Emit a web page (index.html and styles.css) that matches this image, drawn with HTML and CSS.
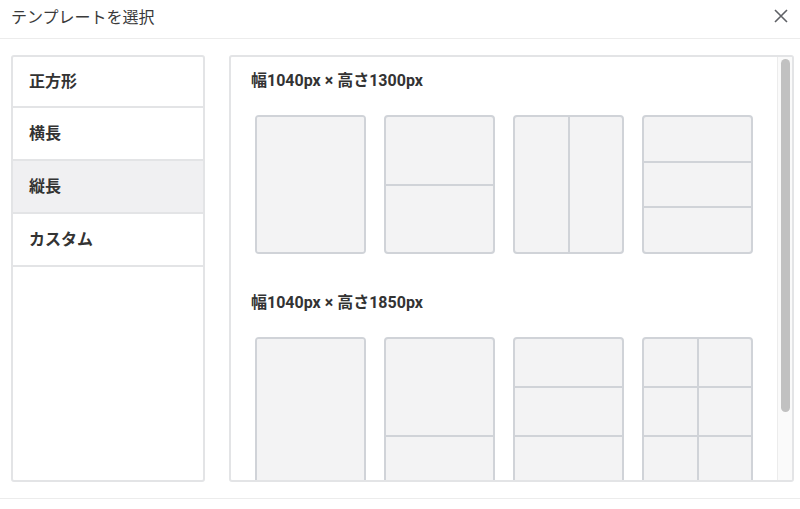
FILE: index.html
```html
<!DOCTYPE html>
<html lang="ja">
<head>
  <meta charset="UTF-8" />
  <title>テンプレートを選択</title>
  <link rel="stylesheet" href="styles.css">
</head>
<body>

  <!-- Header -->
  <header class="modal-head">
    <h1>テンプレートを選択</h1>
    <button class="close-btn" aria-label="閉じる">
      <svg width="16" height="16" viewBox="0 0 16 16">
        <path d="M2 2 L14 14 M14 2 L2 14" stroke="#5f6166" stroke-width="1.6" fill="none" />
      </svg>
    </button>
  </header>

  <main class="modal-body">
    <ul class="size-list">
      <li>正方形</li>
      <li>横長</li>
      <li class="active">縦長</li>
      <li>カスタム</li>
    </ul>

    <section class="template-pane">
      <h2>幅1040px × 高さ1300px</h2>
      <div class="card-row">
        <div class="card tall-a"><div class="cell"></div></div>
        <div class="card tall-a rows"><div class="cell"></div><div class="cell"></div></div>
        <div class="card tall-a cols"><div class="cell"></div><div class="cell"></div></div>
        <div class="card tall-a rows"><div class="cell"></div><div class="cell"></div><div class="cell"></div></div>
      </div>

      <h2 class="second">幅1040px × 高さ1850px</h2>
      <div class="card-row">
        <div class="card tall-b"><div class="cell"></div></div>
        <div class="card tall-b rows"><div class="cell"></div><div class="cell"></div></div>
        <div class="card tall-b rows"><div class="cell"></div><div class="cell"></div><div class="cell"></div><div class="cell"></div></div>
        <div class="card tall-b grid">
          <div class="cell"></div><div class="cell"></div>
          <div class="cell"></div><div class="cell"></div>
          <div class="cell"></div><div class="cell"></div>
          <div class="cell"></div><div class="cell"></div>
        </div>
      </div>

      <!-- scrollbar drawn by hand, headless browser hides the native one -->
      <div class="scrollbar"><div class="thumb"></div></div>
    </section>
  </main>

  <footer class="modal-foot"></footer>

</body>
</html>
```

FILE: styles.css
```css
body {
  margin: 0;
  font-family: Roboto, "Noto Sans CJK JP", sans-serif;
  color: #333;
  background: #fff;
}

/* Header */
.modal-head {
  height: 38px;
  display: flex;
  align-items: center;
  justify-content: space-between;
  padding: 0 11px;
  border-bottom: 1px solid #ececec;
}

.modal-head h1 {
  margin: -7px 0 0;
  font-size: 16px;
  font-weight: 400;
  color: #3a3a3a;
}

.close-btn {
  border: none;
  background: none;
  padding: 0;
  margin-top: -6px;
  cursor: pointer;
  display: flex;
}

/* Body */
.modal-body {
  display: flex;
  gap: 24px;
  padding: 16px 6px 16px 11px;
}

.size-list {
  list-style: none;
  margin: 0;
  padding: 0;
  width: 194px;
  height: 427px;
  box-sizing: border-box;
  border: 2px solid #e3e4e6;
  border-radius: 3px;
}

.size-list li {
  height: 51px;
  line-height: 51px;
  padding-left: 16px;
  font-size: 16px;
  font-weight: 700;
  border-bottom: 2px solid #e3e4e6;
}

.size-list li:first-child {
  height: 49px;
  line-height: 49px;
}

.size-list li.active {
  background: #f0f0f2;
}

.template-pane {
  position: relative;
  flex: 1;
  height: 427px;
  box-sizing: border-box;
  border: 2px solid #e3e4e6;
  border-radius: 3px;
  overflow: hidden;
  padding: 14px 0 24px 0;
}

.scrollbar {
  position: absolute;
  top: 0;
  right: 0;
  bottom: 0;
  width: 14px;
  background: #fafafa;
  border-left: 1px solid #ececec;
}

.scrollbar .thumb {
  margin: 2px 0 0 3px;
  width: 9px;
  height: 353px;
  background: #c1c1c1;
  border-radius: 5px;
}

.template-pane h2 {
  margin: 0 0 24px;
  padding-left: 20px;
  font-size: 16px;
  line-height: 20px;
  font-weight: 700;
}

.template-pane h2.second {
  margin-top: 39px;
}

/* Template cards */
.card-row {
  display: flex;
  gap: 18px;
  padding-left: 24px;
}

.card {
  width: 111px;
  box-sizing: border-box;
  border: 2px solid #d0d3d8;
  border-radius: 4px;
  background: #d0d3d8;
  display: flex;
  flex-direction: column;
  gap: 2px;
  overflow: hidden;
}

.card.tall-a { height: 139px; }
.card.tall-b { height: 198px; }

.card.cols { flex-direction: row; }

.card .cell {
  flex: 1;
  background: #f3f3f4;
}

.card.grid {
  display: grid;
  grid-template-columns: 1fr 1fr;
  grid-template-rows: repeat(4, 1fr);
}

.modal-foot {
  border-top: 1px solid #ececec;
  height: 10px;
}
```
